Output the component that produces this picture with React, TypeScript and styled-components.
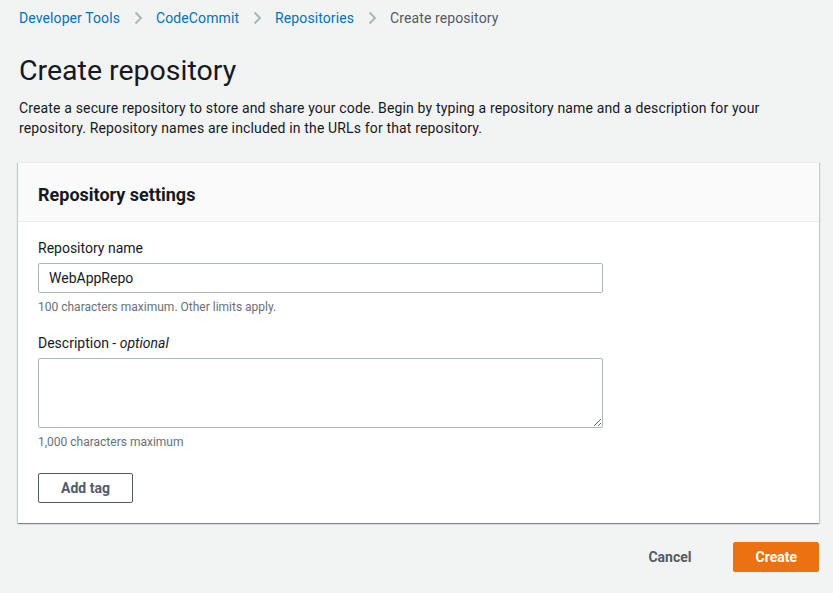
import React from "react";
import styled, { createGlobalStyle } from "styled-components";

const Global = createGlobalStyle`
  html, body { margin: 0; padding: 0; background: #f2f3f3; }
  body { font-family: Roboto, "Noto Sans", sans-serif; color: #16191f; font-size: 14px; }
  * { box-sizing: border-box; }
`;

const Page = styled.div`
  padding: 8px 14px 0 19px;
  display: flex;
  flex-direction: column;
  min-height: 593px;
`;

const Crumbs = styled.nav`
  display: flex;
  align-items: center;
  height: 20px;
  font-size: 14px;
  line-height: 20px;
  letter-spacing: 0.1px;
`;

const CrumbLink = styled.a`
  color: #0073bb;
  text-decoration: none;
`;

const CrumbCurrent = styled.span`
  color: #545b64;
`;

const Sep = styled.span`
  display: inline-flex;
  width: 36px;
  justify-content: center;
  align-items: center;
`;

const Title = styled.h1`
  margin: 25px 0 0 0;
  font-size: 28.5px;
  font-weight: 400;
  line-height: 36px;
  color: #16191f;
`;

const Intro = styled.p`
  margin: 9px 0 0 0;
  font-size: 14px;
  line-height: 20px;
  max-width: 790px;
  letter-spacing: 0.15px;
`;

const Panel = styled.section`
  margin: 24px 0 0 -1px;
  width: 801px;
  background: #fff;
  box-shadow: 0 1px 1px 0 rgba(0, 28, 36, 0.3), 1px 1px 1px 0 rgba(0, 28, 36, 0.15),
    -1px 1px 1px 0 rgba(0, 28, 36, 0.15);
  border-top: 1px solid #eaeded;
`;

const PanelHeader = styled.header`
  background: #fafafa;
  border-bottom: 1px solid #eaeded;
  height: 59px;
  display: flex;
  align-items: flex-start;
  padding: 21px 20px 0 20px;
`;

const PanelTitle = styled.h2`
  margin: 0;
  font-size: 18px;
  font-weight: 700;
  line-height: 22px;
`;

const PanelBody = styled.div`
  padding: 16px 20px 20px 20px;
  display: flex;
  flex-direction: column;
`;

const Field = styled.div<{ $gap?: number }>`
  display: flex;
  flex-direction: column;
  margin-bottom: ${(p) => p.$gap ?? 0}px;
`;

const Label = styled.label`
  font-size: 14px;
  line-height: 20px;
  color: #16191f;
  margin-bottom: 5px;
`;

const Optional = styled.i`
  font-style: italic;
`;

const TextInput = styled.input`
  width: 565px;
  height: 30px;
  border: 1px solid #aab7b8;
  border-radius: 2px;
  padding: 4px 10px;
  font-family: inherit;
  font-size: 14px;
  color: #16191f;
  background: #fff;
  outline: none;
`;

const TextArea = styled.textarea`
  width: 565px;
  height: 70px;
  border: 1px solid #aab7b8;
  border-radius: 2px;
  padding: 4px 10px;
  font-family: inherit;
  font-size: 14px;
  background: #fff;
  outline: none;
  resize: vertical;
  display: block;
`;

const Hint = styled.div`
  font-size: 12px;
  line-height: 16px;
  color: #687078;
  margin-top: 6px;
`;

const SecondaryButton = styled.button`
  align-self: flex-start;
  height: 30px;
  padding: 0 22px;
  border: 1px solid #545b64;
  border-radius: 2px;
  background: #fff;
  color: #545b64;
  font-family: inherit;
  font-size: 14px;
  font-weight: 700;
  cursor: pointer;
`;

const Actions = styled.div`
  display: flex;
  justify-content: flex-end;
  align-items: center;
  gap: 22px;
  margin-top: 19px;
  width: 800px;
`;

const LinkButton = styled.button`
  height: 30px;
  padding: 0 20px;
  border: none;
  background: transparent;
  color: #545b64;
  font-family: inherit;
  font-size: 14px;
  font-weight: 700;
`;

const PrimaryButton = styled.button`
  height: 30px;
  padding: 0 21px;
  border: 1px solid #ec7211;
  border-radius: 2px;
  background: #ec7211;
  color: #fff;
  font-family: inherit;
  font-size: 14px;
  font-weight: 700;
`;

const Chevron = () => (
  <svg width="9" height="14" viewBox="0 0 9 14" fill="none">
    <path d="M1.5 1.5 L7 7 L1.5 12.5" stroke="#aab7b8" strokeWidth="2" />
  </svg>
);

export default function App() {
  return (
    <>
      <Global />
      <Page>
        <Crumbs>
          <CrumbLink href="#">Developer Tools</CrumbLink>
          <Sep><Chevron /></Sep>
          <CrumbLink href="#">CodeCommit</CrumbLink>
          <Sep><Chevron /></Sep>
          <CrumbLink href="#">Repositories</CrumbLink>
          <Sep><Chevron /></Sep>
          <CrumbCurrent>Create repository</CrumbCurrent>
        </Crumbs>
        <Title>Create repository</Title>
        <Intro>
          Create a secure repository to store and share your code. Begin by typing a repository name and a
          description for your repository. Repository names are included in the URLs for that repository.
        </Intro>
        <Panel>
          <PanelHeader>
            <PanelTitle>Repository settings</PanelTitle>
          </PanelHeader>
          <PanelBody>
            <Field $gap={18}>
              <Label>Repository name</Label>
              <TextInput defaultValue="WebAppRepo" />
              <Hint>100 characters maximum. Other limits apply.</Hint>
            </Field>
            <Field $gap={23}>
              <Label>
                Description - <Optional>optional</Optional>
              </Label>
              <TextArea />
              <Hint>1,000 characters maximum</Hint>
            </Field>
            <SecondaryButton>Add tag</SecondaryButton>
          </PanelBody>
        </Panel>
        <Actions>
          <LinkButton>Cancel</LinkButton>
          <PrimaryButton>Create</PrimaryButton>
        </Actions>
      </Page>
    </>
  );
}
